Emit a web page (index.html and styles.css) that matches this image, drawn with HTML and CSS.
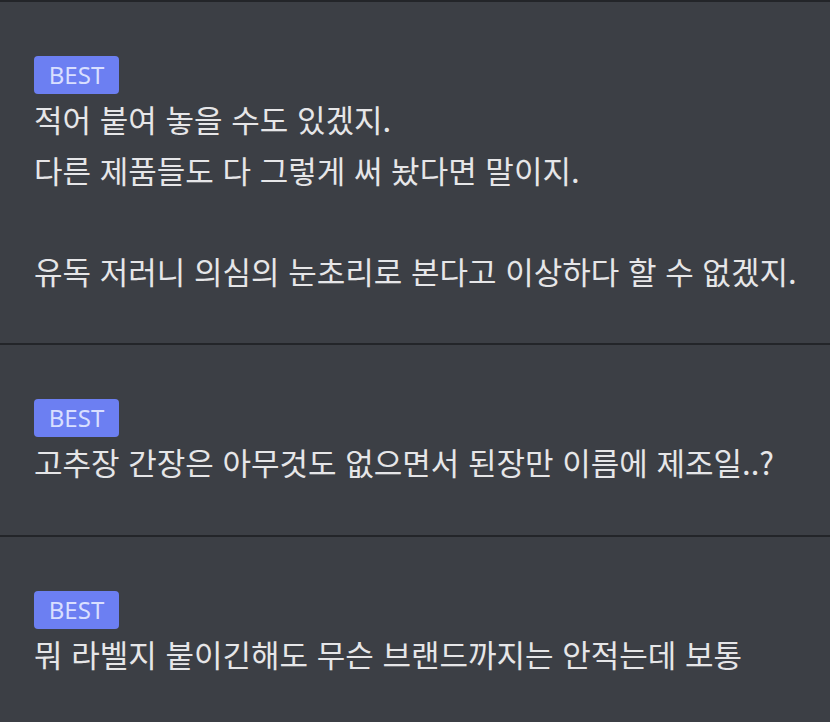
FILE: index.html
```html
<!DOCTYPE html>
<html lang="ko">
<head>
<meta charset="utf-8">
<link rel="stylesheet" href="styles.css">
</head>
<body>
<div class="list">
  <section class="item">
    <span class="badge">BEST</span>
    <p class="text">적어 붙여 놓을 수도 있겠지.<br>다른 제품들도 다 그렇게 써 놨다면 말이지.<br><br>유독 저러니 의심의 눈초리로 본다고 이상하다 할 수 없겠지.</p>
  </section>
  <section class="item">
    <span class="badge">BEST</span>
    <p class="text">고추장 간장은 아무것도 없으면서 된장만 이름에 제조일..?</p>
  </section>
  <section class="item">
    <span class="badge">BEST</span>
    <p class="text">뭐 라벨지 붙이긴해도 무슨 브랜드까지는 안적는데 보통</p>
  </section>
</div>
</body>
</html>
```

FILE: styles.css
```css
html, body {
  margin: 0;
  padding: 0;
  background: #3c3f45;
}
body {
  width: 830px;
  height: 722px;
  overflow: hidden;
  font-family: "Noto Sans", "Noto Sans CJK KR", sans-serif;
}
.list {
  display: flex;
  flex-direction: column;
}
.item {
  border-top: 2px solid #232529;
  padding: 54px 0 47px 34px;
  display: flex;
  flex-direction: column;
  align-items: flex-start;
}
.badge {
  display: flex;
  align-items: center;
  justify-content: center;
  width: 85px;
  height: 38px;
  box-sizing: border-box;
  border-radius: 4px;
  background: #6c7ff2;
  color: #d9dfff;
  font-family: "Noto Sans", sans-serif;
  font-size: 24px;
  line-height: 1;
}
.text {
  margin: 0;
  color: #e6e6e8;
  font-family: "Noto Sans CJK KR", "Noto Sans", sans-serif;
  font-size: 31px;
  line-height: 50.5px;
  white-space: nowrap;
}
```
